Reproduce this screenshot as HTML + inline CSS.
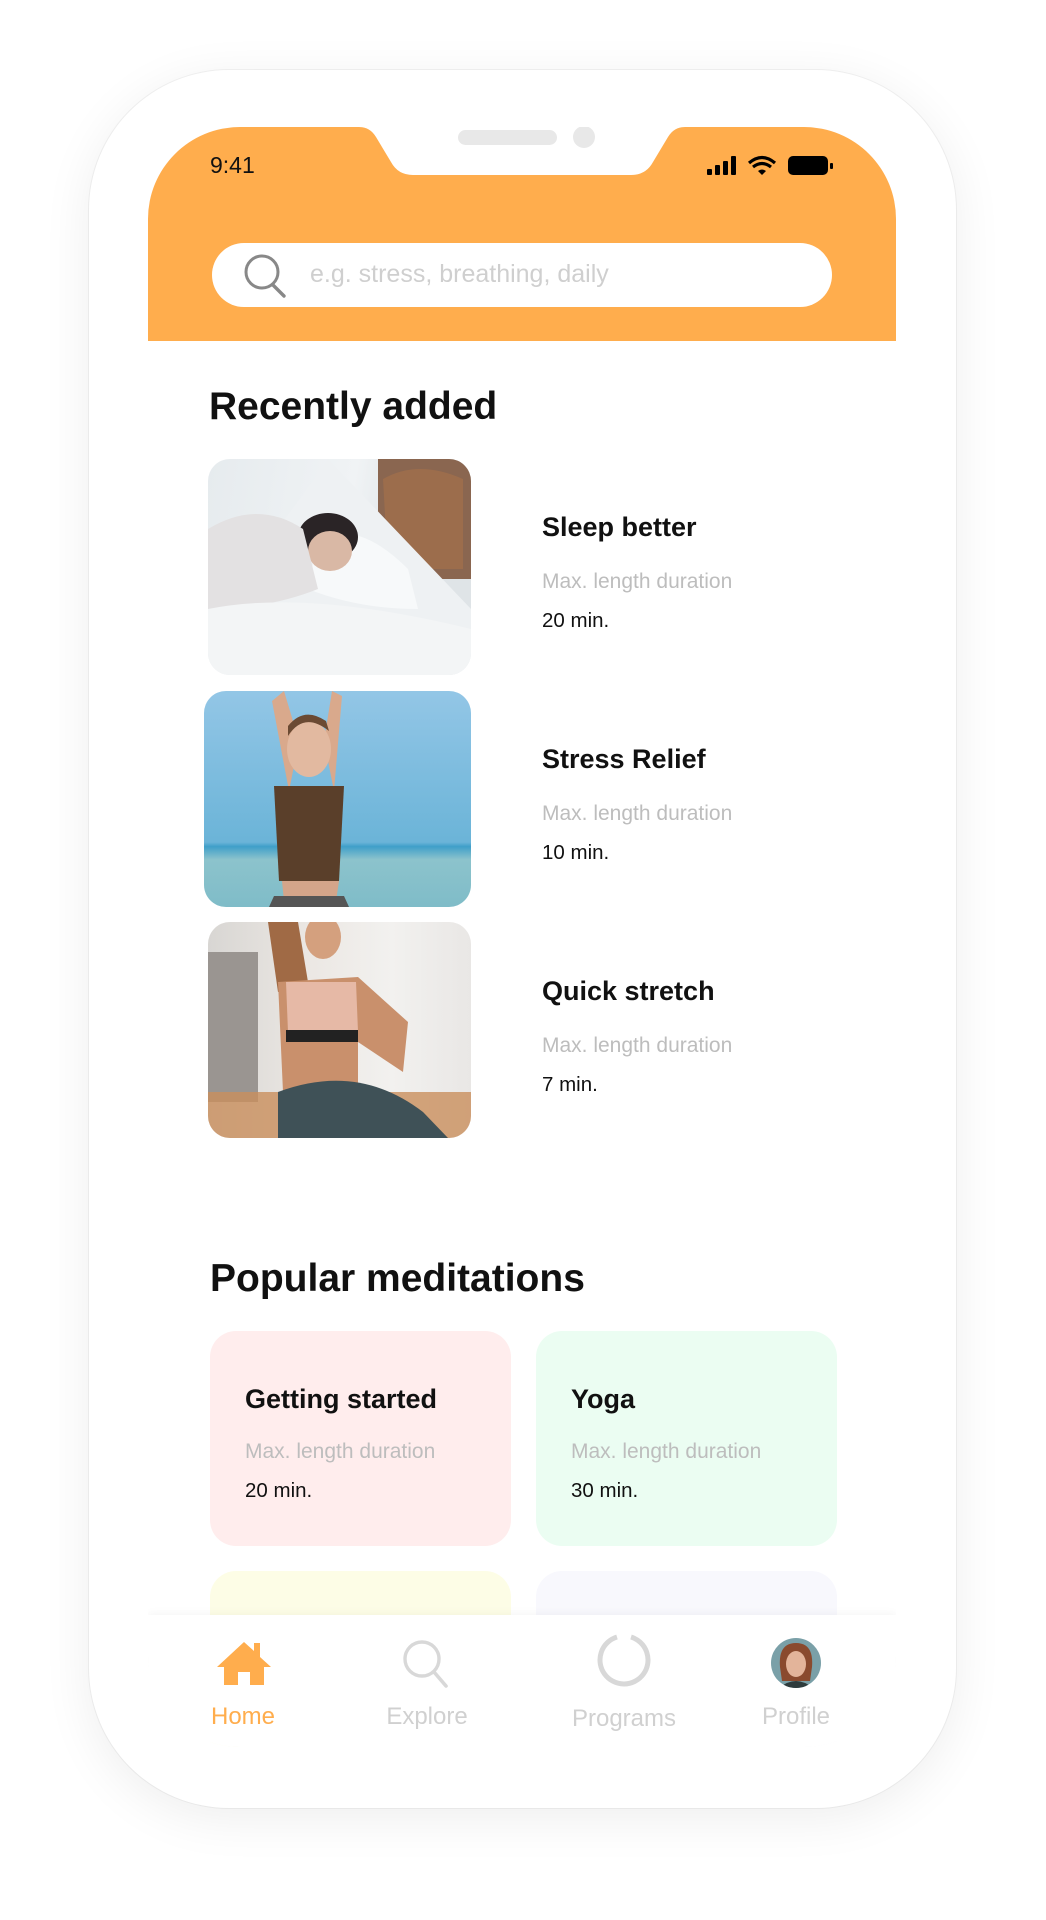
<!DOCTYPE html>
<html><head><meta charset="utf-8">
<style>
*{margin:0;padding:0;box-sizing:border-box}
body{width:1046px;height:1920px;background:#fff;position:relative;overflow:hidden;font-family:"Liberation Sans",Arial,sans-serif}
.phone{position:absolute;left:89px;top:70px;width:867px;height:1738px;border-radius:140px;background:#fff;box-shadow:0 10px 50px rgba(0,0,0,0.07),0 0 0 1px #f3f3f3}
.screen{position:absolute;left:148px;top:127px;width:748px;height:1620px;border-radius:92px;background:#fff;overflow:hidden}
.top{position:absolute;left:0;top:0;width:748px;height:214px;background:#ffad4d}
.abs{position:absolute}
.t{position:absolute;white-space:nowrap}
.h1{font-size:39px;font-weight:bold;color:#111}
.img{position:absolute;width:263px;height:216px;border-radius:22px;overflow:hidden}
.title{font-size:27px;font-weight:bold;color:#111}
.sub{font-size:21px;color:#bdbdbd}
.min{font-size:20.5px;color:#111}
.card{position:absolute;width:301px;height:215px;border-radius:26px}
.tab{position:absolute;left:0;top:1488px;width:748px;height:132px;background:#fff;box-shadow:0 -2px 8px rgba(0,0,0,0.04)}
.lbl{position:absolute;font-size:24px;color:#d0d0d0;transform:translateX(-50%);top:88px}
</style></head><body>
<div class="phone"></div>
<div class="screen">
  <div class="top"></div>
  <svg class="abs" style="left:0;top:0" width="748" height="60">
    <path d="M200 0 L211 0 Q222 0 228 10 L243 35 Q250 48 265 48 L483 48 Q498 48 505 35 L520 10 Q526 0 537 0 L548 0 L548 -5 L200 -5Z" fill="#fff"/>
    <rect x="310" y="3" width="99" height="15" rx="7.5" fill="#e8e8e8"/>
    <circle cx="436" cy="10" r="11" fill="#e8e8e8"/>
  </svg>
  <div class="t" style="left:62px;top:25px;font-size:23px;color:#111">9:41</div>
  <svg class="abs" style="left:558px;top:28px" width="130" height="22">
    <rect x="1" y="14" width="5" height="6" rx="1" fill="#000"/>
    <rect x="9" y="10" width="5" height="10" rx="1" fill="#000"/>
    <rect x="17" y="6" width="5" height="14" rx="1" fill="#000"/>
    <rect x="25" y="1" width="5" height="19" rx="1" fill="#000"/>
    <path d="M43 8 Q56 -3 69 8" stroke="#000" stroke-width="3.2" fill="none"/>
    <path d="M47 12 Q56 5 65 12" stroke="#000" stroke-width="3.2" fill="none"/>
    <path d="M52 16 L56 20 L60 16 Q56 13 52 16Z" fill="#000"/>
    <rect x="82" y="1" width="40" height="19" rx="5" fill="#000"/>
    <rect x="124" y="8" width="3" height="6" rx="1" fill="#000"/>
  </svg>
  <div class="abs" style="left:64px;top:116px;width:620px;height:64px;background:#fff;border-radius:32px"></div>
  <svg class="abs" style="left:94px;top:126px" width="50" height="48">
    <circle cx="20" cy="19" r="16" stroke="#888" stroke-width="3" fill="none"/>
    <path d="M31 32 L42 43" stroke="#888" stroke-width="3.4" stroke-linecap="round"/>
  </svg>
  <div class="t" style="left:162px;top:133px;font-size:25px;color:#cfcfcf">e.g. stress, breathing, daily</div>

  <div class="t h1" style="left:61px;top:258px">Recently added</div>

  <div class="img" style="left:60px;top:332px;background:linear-gradient(100deg,#e6ebee 0%,#f0f3f5 50%,#dfe4e7 70%)">
    <svg width="263" height="216">
      <rect x="170" y="0" width="93" height="120" fill="#8a6650"/>
      <path d="M175 20 Q210 0 255 20 L255 110 L180 110Z" fill="#a9724a" opacity=".6"/>
      <path d="M120 0 L263 150 L263 216 L0 216 L0 140 Q60 90 120 0Z" fill="#eef1f3"/>
      <path d="M110 80 Q150 60 200 110 L210 150 Q150 150 100 130Z" fill="#f7f9fa"/>
      <ellipse cx="120" cy="78" rx="30" ry="24" fill="#2a2426"/>
      <ellipse cx="122" cy="92" rx="22" ry="20" fill="#d9b8a5"/>
      <path d="M0 70 Q50 40 95 70 L110 130 Q60 150 0 150Z" fill="#e3e1e2"/>
      <path d="M0 150 Q100 130 263 170 L263 216 L0 216Z" fill="#f3f5f6"/>
    </svg>
  </div>
  <div class="t title" style="left:394px;top:385px">Sleep better</div>
  <div class="t sub" style="left:394px;top:443px">Max. length duration</div>
  <div class="t min" style="left:394px;top:482px">20 min.</div>

  <div class="img" style="left:56px;top:564px;width:267px;background:linear-gradient(180deg,#93c6e6 0%,#6bb4d8 70%,#3f9fc9 72%,#8cc3cc 78%,#7fbcc8 100%)">
    <svg width="267" height="216">
      <path d="M68 10 L80 0 L95 50 L85 100 Z M138 5 L128 0 L120 50 L130 100 Z" fill="#d9a98c"/>
      <ellipse cx="105" cy="58" rx="22" ry="28" fill="#e2b9a0"/>
      <path d="M84 45 Q100 20 125 40 L122 30 Q100 15 84 35Z" fill="#6b4a33"/>
      <path d="M70 95 L140 95 L135 190 L75 190Z" fill="#5a3f2a"/>
      <path d="M78 190 L135 190 L132 210 L80 210Z" fill="#d4a58a"/>
      <path d="M70 205 L140 205 L145 216 L65 216Z" fill="#555"/>
    </svg>
  </div>
  <div class="t title" style="left:394px;top:617px">Stress Relief</div>
  <div class="t sub" style="left:394px;top:675px">Max. length duration</div>
  <div class="t min" style="left:394px;top:714px">10 min.</div>

  <div class="img" style="left:60px;top:795px;background:linear-gradient(90deg,#d8d6d3 0%,#ece8e4 40%,#f2f1ef 70%,#e9e7e5 100%)">
    <svg width="263" height="216">
      <rect x="0" y="30" width="50" height="150" fill="#9a9591"/>
      <rect x="0" y="170" width="263" height="46" fill="#c98f5c" opacity=".8"/>
      <path d="M60 0 L90 0 L100 60 L70 70Z" fill="#a06a45"/>
      <ellipse cx="115" cy="15" rx="18" ry="22" fill="#d4a07e"/>
      <path d="M70 60 L150 55 L200 100 L195 150 L150 120 L150 170 L75 170Z" fill="#c9906c"/>
      <path d="M78 60 L148 60 L150 110 L80 110Z" fill="#e6b9a6"/>
      <rect x="78" y="108" width="72" height="12" fill="#222"/>
      <path d="M70 170 Q150 140 215 190 L240 216 L70 216Z" fill="#3f5157"/>
    </svg>
  </div>
  <div class="t title" style="left:394px;top:849px">Quick stretch</div>
  <div class="t sub" style="left:394px;top:907px">Max. length duration</div>
  <div class="t min" style="left:394px;top:946px">7 min.</div>

  <div class="t h1" style="left:62px;top:1130px">Popular meditations</div>

  <div class="card" style="left:62px;top:1204px;background:#ffeded"></div>
  <div class="card" style="left:388px;top:1204px;background:#ebfdf2"></div>
  <div class="t title" style="left:97px;top:1257px">Getting started</div>
  <div class="t sub" style="left:97px;top:1313px">Max. length duration</div>
  <div class="t min" style="left:97px;top:1352px">20 min.</div>
  <div class="t title" style="left:423px;top:1257px">Yoga</div>
  <div class="t sub" style="left:423px;top:1313px">Max. length duration</div>
  <div class="t min" style="left:423px;top:1352px">30 min.</div>
  <div class="card" style="left:62px;top:1444px;background:#fdfde6"></div>
  <div class="card" style="left:388px;top:1444px;background:#f8f8fd"></div>

  <div class="tab">
    <svg class="abs" style="left:66px;top:24px" width="60" height="50">
      <path d="M30 3 L3 28 L10 28 L10 46 L24 46 L24 33 L36 33 L36 46 L50 46 L50 28 L57 28 L46 18 L46 4 L40 4 L40 12Z" fill="#ffad4d"/>
    </svg>
    <div class="lbl" style="left:95px;color:#ffad4d">Home</div>
    <svg class="abs" style="left:252px;top:22px" width="56" height="56">
      <circle cx="22" cy="22" r="17" stroke="#d8d8d8" stroke-width="3.4" fill="none"/>
      <path d="M34 35 L46 49" stroke="#d8d8d8" stroke-width="3.6" stroke-linecap="round"/>
    </svg>
    <div class="lbl" style="left:279px">Explore</div>
    <svg class="abs" style="left:446px;top:16px" width="60" height="60">
      <path d="M23 6 A24 24 0 1 0 37 6" stroke="#d8d8d8" stroke-width="5" fill="none"/>
    </svg>
    <div class="lbl" style="left:476px;top:90px">Programs</div>
    <svg class="abs" style="left:622px;top:22px" width="52" height="52">
      <defs><clipPath id="c"><circle cx="26" cy="26" r="25"/></clipPath></defs>
      <g clip-path="url(#c)">
        <rect width="52" height="52" fill="#7aa0a8"/>
        <path d="M10 30 Q8 6 26 6 Q44 6 42 30 L40 44 L12 44Z" fill="#8a4a2e"/>
        <ellipse cx="26" cy="27" rx="10" ry="13" fill="#e3b49a"/>
        <path d="M8 52 Q26 36 44 52Z" fill="#2e3b3c"/>
      </g>
    </svg>
    <div class="lbl" style="left:648px">Profile</div>
  </div>
</div>
</body></html>
